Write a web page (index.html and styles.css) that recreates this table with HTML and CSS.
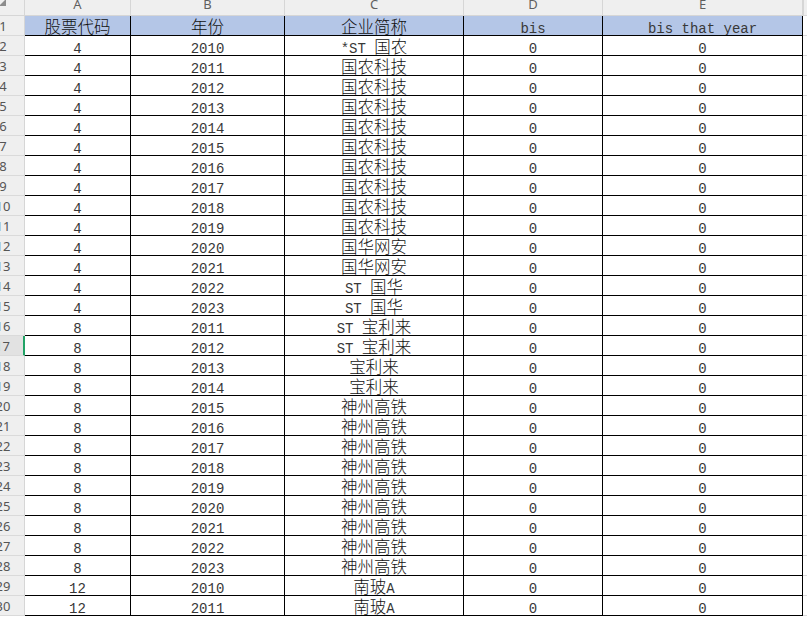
FILE: index.html
```html
<!DOCTYPE html>
<html lang="zh">
<head>
<meta charset="utf-8">
<title>Sheet</title>
<link rel="stylesheet" href="styles.css">
</head>
<body>
<div class="sheet">
  <div class="ch corner"><svg class="tri" width="8" height="8" viewBox="0 0 8 8"><polygon points="0,7 7,0 7,7" fill="#8c8c8c"/></svg></div>
  <div class="ch">A</div><div class="ch">B</div><div class="ch">C</div><div class="ch">D</div><div class="ch">E</div><div class="ch ex"></div>

  <div class="rh"><span>1</span></div>
  <div class="c hd"><span class="z">股票代码</span></div><div class="c hd"><span class="z">年份</span></div><div class="c hd"><span class="z">企业简称</span></div><div class="c hd">bis</div><div class="c hd">bis that year</div><div class="ex"></div>

  <div class="rh"><span>2</span></div>
  <div class="c">4</div><div class="c">2010</div><div class="c">*ST <span class="z">国农</span></div><div class="c">0</div><div class="c">0</div><div class="ex"></div>
  <div class="rh"><span>3</span></div>
  <div class="c">4</div><div class="c">2011</div><div class="c"><span class="z">国农科技</span></div><div class="c">0</div><div class="c">0</div><div class="ex"></div>
  <div class="rh"><span>4</span></div>
  <div class="c">4</div><div class="c">2012</div><div class="c"><span class="z">国农科技</span></div><div class="c">0</div><div class="c">0</div><div class="ex"></div>
  <div class="rh"><span>5</span></div>
  <div class="c">4</div><div class="c">2013</div><div class="c"><span class="z">国农科技</span></div><div class="c">0</div><div class="c">0</div><div class="ex"></div>
  <div class="rh"><span>6</span></div>
  <div class="c">4</div><div class="c">2014</div><div class="c"><span class="z">国农科技</span></div><div class="c">0</div><div class="c">0</div><div class="ex"></div>
  <div class="rh"><span>7</span></div>
  <div class="c">4</div><div class="c">2015</div><div class="c"><span class="z">国农科技</span></div><div class="c">0</div><div class="c">0</div><div class="ex"></div>
  <div class="rh"><span>8</span></div>
  <div class="c">4</div><div class="c">2016</div><div class="c"><span class="z">国农科技</span></div><div class="c">0</div><div class="c">0</div><div class="ex"></div>
  <div class="rh"><span>9</span></div>
  <div class="c">4</div><div class="c">2017</div><div class="c"><span class="z">国农科技</span></div><div class="c">0</div><div class="c">0</div><div class="ex"></div>
  <div class="rh"><span>10</span></div>
  <div class="c">4</div><div class="c">2018</div><div class="c"><span class="z">国农科技</span></div><div class="c">0</div><div class="c">0</div><div class="ex"></div>
  <div class="rh"><span>11</span></div>
  <div class="c">4</div><div class="c">2019</div><div class="c"><span class="z">国农科技</span></div><div class="c">0</div><div class="c">0</div><div class="ex"></div>
  <div class="rh"><span>12</span></div>
  <div class="c">4</div><div class="c">2020</div><div class="c"><span class="z">国华网安</span></div><div class="c">0</div><div class="c">0</div><div class="ex"></div>
  <div class="rh"><span>13</span></div>
  <div class="c">4</div><div class="c">2021</div><div class="c"><span class="z">国华网安</span></div><div class="c">0</div><div class="c">0</div><div class="ex"></div>
  <div class="rh"><span>14</span></div>
  <div class="c">4</div><div class="c">2022</div><div class="c">ST <span class="z">国华</span></div><div class="c">0</div><div class="c">0</div><div class="ex"></div>
  <div class="rh"><span>15</span></div>
  <div class="c">4</div><div class="c">2023</div><div class="c">ST <span class="z">国华</span></div><div class="c">0</div><div class="c">0</div><div class="ex"></div>
  <div class="rh"><span>16</span></div>
  <div class="c">8</div><div class="c">2011</div><div class="c">ST <span class="z">宝利来</span></div><div class="c">0</div><div class="c">0</div><div class="ex"></div>
  <div class="rh sel"><span>17</span></div>
  <div class="c">8</div><div class="c">2012</div><div class="c">ST <span class="z">宝利来</span></div><div class="c">0</div><div class="c">0</div><div class="ex"></div>
  <div class="rh"><span>18</span></div>
  <div class="c">8</div><div class="c">2013</div><div class="c"><span class="z">宝利来</span></div><div class="c">0</div><div class="c">0</div><div class="ex"></div>
  <div class="rh"><span>19</span></div>
  <div class="c">8</div><div class="c">2014</div><div class="c"><span class="z">宝利来</span></div><div class="c">0</div><div class="c">0</div><div class="ex"></div>
  <div class="rh"><span>20</span></div>
  <div class="c">8</div><div class="c">2015</div><div class="c"><span class="z">神州高铁</span></div><div class="c">0</div><div class="c">0</div><div class="ex"></div>
  <div class="rh"><span>21</span></div>
  <div class="c">8</div><div class="c">2016</div><div class="c"><span class="z">神州高铁</span></div><div class="c">0</div><div class="c">0</div><div class="ex"></div>
  <div class="rh"><span>22</span></div>
  <div class="c">8</div><div class="c">2017</div><div class="c"><span class="z">神州高铁</span></div><div class="c">0</div><div class="c">0</div><div class="ex"></div>
  <div class="rh"><span>23</span></div>
  <div class="c">8</div><div class="c">2018</div><div class="c"><span class="z">神州高铁</span></div><div class="c">0</div><div class="c">0</div><div class="ex"></div>
  <div class="rh"><span>24</span></div>
  <div class="c">8</div><div class="c">2019</div><div class="c"><span class="z">神州高铁</span></div><div class="c">0</div><div class="c">0</div><div class="ex"></div>
  <div class="rh"><span>25</span></div>
  <div class="c">8</div><div class="c">2020</div><div class="c"><span class="z">神州高铁</span></div><div class="c">0</div><div class="c">0</div><div class="ex"></div>
  <div class="rh"><span>26</span></div>
  <div class="c">8</div><div class="c">2021</div><div class="c"><span class="z">神州高铁</span></div><div class="c">0</div><div class="c">0</div><div class="ex"></div>
  <div class="rh"><span>27</span></div>
  <div class="c">8</div><div class="c">2022</div><div class="c"><span class="z">神州高铁</span></div><div class="c">0</div><div class="c">0</div><div class="ex"></div>
  <div class="rh"><span>28</span></div>
  <div class="c">8</div><div class="c">2023</div><div class="c"><span class="z">神州高铁</span></div><div class="c">0</div><div class="c">0</div><div class="ex"></div>
  <div class="rh"><span>29</span></div>
  <div class="c">12</div><div class="c">2010</div><div class="c"><span class="z">南玻</span>A</div><div class="c">0</div><div class="c">0</div><div class="ex"></div>
  <div class="rh"><span>30</span></div>
  <div class="c">12</div><div class="c">2011</div><div class="c"><span class="z">南玻</span>A</div><div class="c">0</div><div class="c">0</div><div class="ex"></div>
</div>
</body>
</html>
```

FILE: styles.css
```css
html, body {
  margin: 0;
  padding: 0;
  background: #ffffff;
  overflow: hidden;
}

.sheet {
  display: grid;
  grid-template-columns: 25px 106px 154px 179px 139px 200px 1fr;
  grid-template-rows: 16px repeat(30, 20px);
  width: 807px;
  height: 617px;
  overflow: hidden;
}

.ch {
  background: #efefef;
  border-right: 1px solid #d6d6d6;
  border-bottom: 1px solid #d6d6d6;
  display: flex;
  align-items: flex-start;
  justify-content: center;
  font-family: "Noto Sans", "Liberation Sans", sans-serif;
  font-size: 13px;
  line-height: 9px;
  color: #5f5f5f;
  overflow: hidden;
}

.corner {
  justify-content: flex-start;
}

.tri {
  display: block;
  margin: -1px 0 0 -1px;
}

.ch.ex {
  border-right: none;
  border-left: 1px solid #d6d6d6;
}

.rh {
  background: #efefef;
  border-right: 1px solid #d6d6d6;
  border-bottom: 1px solid #dadada;
  display: flex;
  align-items: center;
  justify-content: center;
  padding-right: 18px;
  font-family: "Noto Sans", "Liberation Sans", sans-serif;
  font-size: 13px;
  color: #555555;
  overflow: hidden;
}

.rh span {
  white-space: nowrap;
}

.rh.sel {
  background: #e2e2e2;
  border-right: 2px solid #21a366;
}

.c {
  border-right: 1px solid #000000;
  border-bottom: 1px solid #000000;
  padding-top: 7px;
  text-align: center;
  font-family: "Liberation Mono", "Noto Sans CJK SC", monospace;
  font-size: 14px;
  line-height: 12px;
  color: #383838;
  white-space: pre;
  overflow: hidden;
}

.c.hd {
  background: #b4c6e7;
}

.z {
  font-family: "Noto Sans CJK SC", sans-serif;
  font-size: 16.5px;
  font-weight: 300;
  line-height: 0;
  color: #111111;
}

.ex {
  border-bottom: 1px solid #dadada;
}
```
